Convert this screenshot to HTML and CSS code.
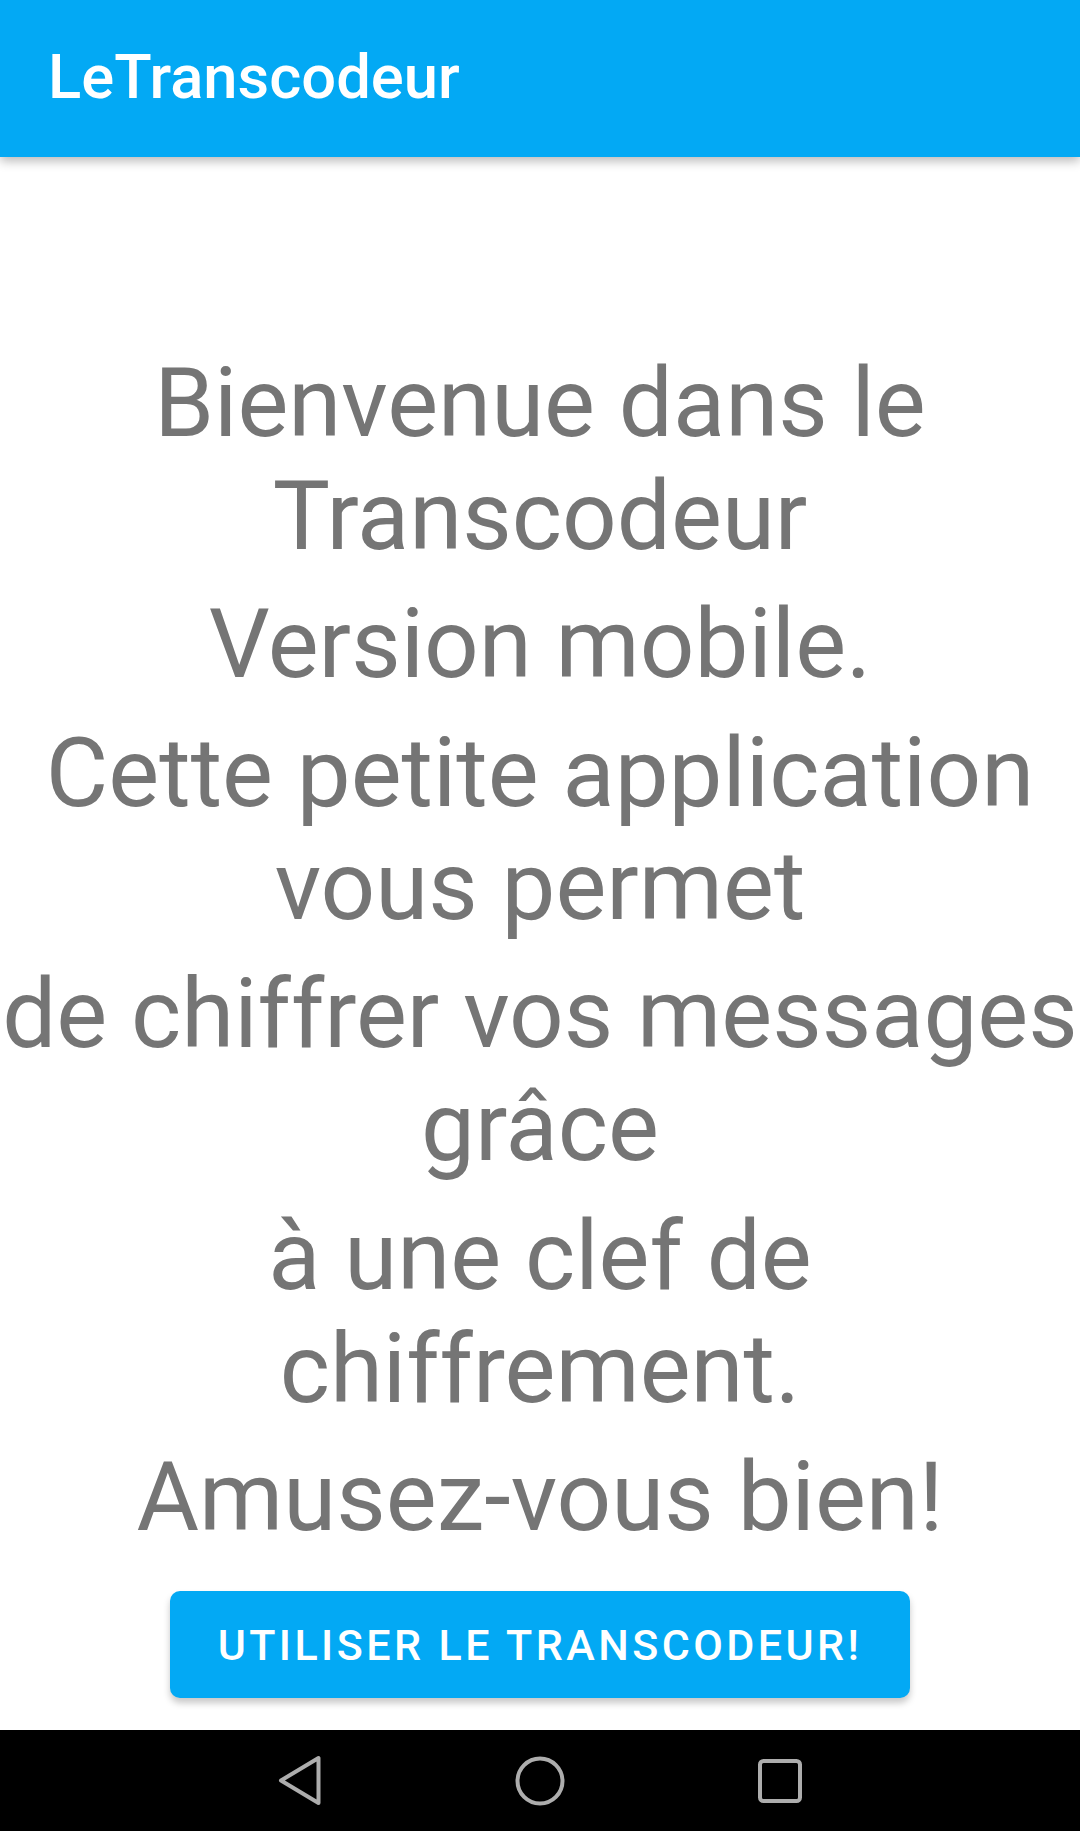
FILE: index.html
```html
<!DOCTYPE html>
<html lang="fr">
<head>
<meta charset="utf-8">
<title>LeTranscodeur</title>
<link rel="stylesheet" href="styles.css">
</head>
<body>
<div class="screen">
  <header class="appbar">
    <h1 class="appbar-title">LeTranscodeur</h1>
  </header>
  <main class="content">
    <p class="intro">Bienvenue dans le<br>Transcodeur</p>
    <p class="intro">Version mobile.</p>
    <p class="intro">Cette petite application<br>vous permet</p>
    <p class="intro">de chiffrer vos messages<br>grâce</p>
    <p class="intro">à une clef de<br>chiffrement.</p>
    <p class="intro">Amusez-vous bien!</p>
    <button class="cta" type="button">UTILISER LE TRANSCODEUR!</button>
  </main>
  <nav class="navbar">
    <svg class="nav-icon" width="60" height="60" viewBox="0 0 60 60" aria-hidden="true">
      <path d="M48.5 7 L48.5 52 L11 29.5 Z" fill="none" stroke="#adadad" stroke-width="4" stroke-linejoin="round"/>
    </svg>
    <svg class="nav-icon" width="60" height="60" viewBox="0 0 60 60" aria-hidden="true">
      <circle cx="30" cy="30" r="22.5" fill="none" stroke="#adadad" stroke-width="4"/>
    </svg>
    <svg class="nav-icon" width="60" height="60" viewBox="0 0 60 60" aria-hidden="true">
      <rect x="10" y="10" width="40" height="40" rx="3.5" fill="none" stroke="#adadad" stroke-width="4"/>
    </svg>
  </nav>
</div>
</body>
</html>
```

FILE: styles.css
```css
html, body {
  margin: 0;
  padding: 0;
  background: #ffffff;
}

.screen {
  width: 1080px;
  height: 1831px;
  display: flex;
  flex-direction: column;
  overflow: hidden;
  font-family: Roboto, "Noto Sans", "Liberation Sans", sans-serif;
}

.appbar {
  height: 157px;
  flex: 0 0 157px;
  background: #03a9f4;
  display: flex;
  align-items: center;
  padding-left: 48px;
  box-shadow: 0 4px 10px rgba(0, 0, 0, 0.28);
  position: relative;
  z-index: 1;
}

.appbar-title {
  margin: 0;
  color: #ffffff;
  font-size: 61.5px;
  font-weight: 500;
  line-height: 1;
  padding-bottom: 2px;
}

.content {
  flex: 1 1 auto;
  display: flex;
  flex-direction: column;
  align-items: center;
  padding-top: 177px;
}

.intro {
  margin: 0;
  padding: 12.5px 0 3px;
  color: #757575;
  font-size: 96px;
  font-weight: 400;
  line-height: 113px;
  text-align: center;
  white-space: nowrap;
}

.cta {
  margin-top: 34px;
  width: 740px;
  height: 107px;
  border: none;
  border-radius: 10px;
  background: #03a9f4;
  color: #ffffff;
  font-family: Roboto, "Noto Sans", "Liberation Sans", sans-serif;
  font-size: 43px;
  font-weight: 500;
  letter-spacing: 0.08em;
  box-shadow: 0 5px 7px rgba(0, 0, 0, 0.22);
  padding: 0;
}

.navbar {
  flex: 0 0 101px;
  height: 101px;
  background: #000000;
  display: flex;
  align-items: center;
  justify-content: center;
  gap: 180px;
}

.nav-icon {
  display: block;
  width: 60px;
  height: 60px;
}
```
